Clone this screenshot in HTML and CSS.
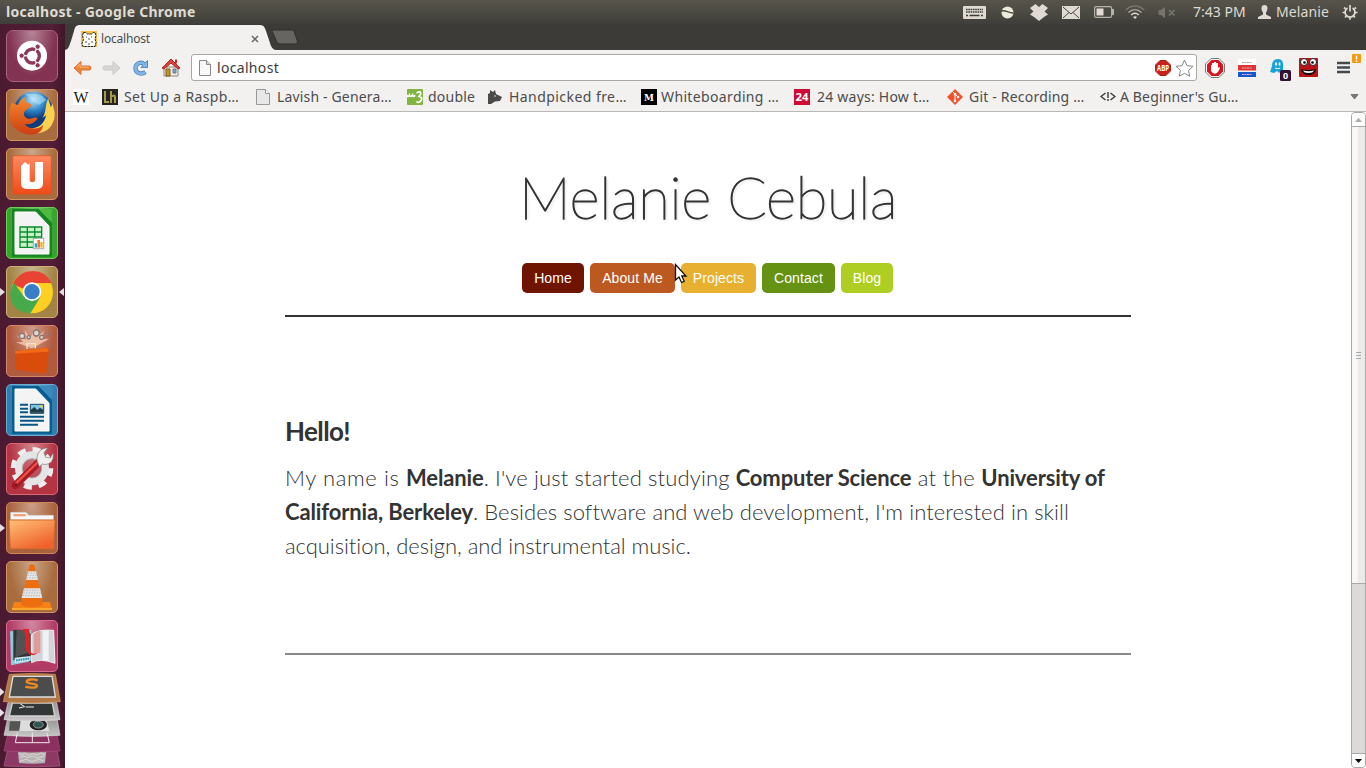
FILE: index.html
```
<!DOCTYPE html>
<html lang="en">
<head>
<meta charset="utf-8">
<title>localhost</title>
<link rel="stylesheet" href="styles.css">
</head>
<body>
<header class="panel">
  <span class="panel-title">localhost - Google Chrome</span>
  <div class="tray">
    <svg class="keyboard" width="23" height="13" viewBox="0 0 23 13"><rect width="23" height="13" rx="1" fill="#dfdbd2"/><path d="M3 3.500h17M3 6h17" stroke="#3c3b37" stroke-width="1.600" stroke-dasharray="1.600 .7"/><path d="M3 9.500h2m1.500 0h10m1.500 0h2" stroke="#3c3b37" stroke-width="1.600"/></svg>
    <svg class="orb" width="13" height="13" viewBox="0 0 13 13"><circle cx="6.500" cy="6.500" r="6" fill="#eceadb"/><path d="M0 5.500C4 2.500 7 7.500 12.500 7" stroke="#4a4943" stroke-width="1.400" fill="none"/></svg>
    <svg class="dropbox" width="18" height="17" viewBox="0 0 18 17"><path d="M5.500 0L9 3l3.500-3L18 4l-3.500 3.500L18 10.500l-4 2.500-5 4-5-4-4-2.500 3.500-3L0 4z" fill="#dfdbd2"/></svg>
    <svg class="mail" width="18" height="13" viewBox="0 0 18 13"><rect width="18" height="13" fill="#dfdbd2"/><path d="M1 1l8 7 8-7M1 12l6-5.500M17 12l-6-5.500" stroke="#45443e" fill="none"/></svg>
    <svg class="battery" width="20" height="12" viewBox="0 0 20 12"><rect x=".6" y=".6" width="17" height="10.800" rx="1.500" fill="none" stroke="#b5b2a9" stroke-width="1.200"/><path d="M2.500 2.500h7v7h-7z" fill="#dfdbd2"/><path d="M18 3h2v6h-2z" fill="#b5b2a9"/></svg>
    <svg class="wifi" width="20" height="14" viewBox="0 0 20 14"><g fill="none" stroke-width="1.500"><path d="M.8 5C6-.5 14-.5 19.200 5" stroke="#77756d"/><path d="M3.500 7.500c4-3.800 9-3.800 13 0" stroke="#aaa79d"/><path d="M6.200 10c2.500-2.300 5-2.300 7.600 0" stroke="#dfdbd2"/></g><path d="M8 12l2 2 2-2c-1-1-3-1-4 0" fill="#dfdbd2"/></svg>
    <svg class="sound" width="18" height="13" viewBox="0 0 18 13"><path d="M1 4.500h2l3.500-3v10L3 8.500H1z" fill="#77756d" stroke="#77756d"/><path d="M11 4l5.500 5.500m0-5.500L11 9.500" stroke="#77756d" stroke-width="1.700"/></svg>
    <span class="clock">7:43 PM</span>
    <svg class="person" width="13" height="14" viewBox="0 0 13 14"><path d="M6.500 0C2.500 0 3 5 5 7.500v2L0 12v2h13v-2L8 9.500v-2C10 5 10.500 0 6.500 0" fill="#dfdbd2"/></svg>
    <span class="user">Melanie</span>
    <svg class="gear" width="16" height="16" viewBox="0 0 16 16" fill="none" stroke="#dfdbd2"><path d="M5.500 4a4.900 4.900 0 1 0 5 0M8 1v6.500" stroke-width="1.700"/><path d="M2 3.500l1.500 1.300M14 3.500l-1.500 1.300M.5 8.500h2.500m10 0h2.500M3 13.500l1.500-1.500m8.500 1.500l-1.500-1.500M8 13.500v2.300" stroke-width="1.700"/></svg>
  </div>
</header>

<div class="desktop">
  <nav class="launcher">
    <div class="tile dash"><svg viewBox="0 0 156 156"><circle cx="78" cy="77" r="45" fill="#fff"/><circle cx="79" cy="78" r="21" fill="none" stroke="#8b3a5c" stroke-width="10"/><path d="M79 78L48 77M79 78l16-27M79 78l16 27" stroke="#fff" stroke-width="4"/><g fill="#8b3a5c" stroke="#fff" stroke-width="3"><circle cx="47" cy="77" r="8"/><circle cx="95" cy="50" r="8"/><circle cx="95" cy="106" r="8"/></g></svg></div>
    <div class="tile brown"><svg viewBox="0 0 156 156"><defs><radialGradient id="globe" cx=".5" cy=".2"><stop offset="0" stop-color="#c4ebff"/><stop offset=".6" stop-color="#2d83c6"/><stop offset="1" stop-color="#123b7c"/></radialGradient><linearGradient id="fox" x2="0" y2="1"><stop stop-color="#f38a2d"/><stop offset="1" stop-color="#cd3d13"/></linearGradient></defs><circle cx="82" cy="66" r="58" fill="url(#globe)"/><path d="M55 12c24 8 46-6 66 22L98 48 78 33z" fill="#b4e4fa" opacity=".55"/><path d="M127 28c0 10 6 16 7 26l7-10c-1 12 7 21 5 36-3 31-24 53-55 52-16 0-26-8-31-14 35 4 55-12 60-39l-11 8c14-19 7-40 18-59" fill="#f7d14f"/><path d="M17 41l18 7c8-15 15-22 22-23-1 8 2 13 6 17 5 0 9 0 13 5-2 8-9 12-17 17-10 9-5 24 9 25 11 1 18-8 27-1-6 14-27 21-40 17 16 18 42 17 56 4-1 16-12 25-31 28-43 1-73-29-71-64 0-12 5-25 8-32" fill="url(#fox)"/></svg></div>
    <div class="tile brown"><svg viewBox="0 0 156 156"><defs><linearGradient id="one" x2="0" y2="1"><stop stop-color="#ff8960"/><stop offset="1" stop-color="#f04b18"/></linearGradient></defs><rect x="20" y="23" width="116" height="115" rx="4" fill="url(#one)" stroke="#e34d1c" stroke-width="2"/><path d="M45 54l12-12 10 8 4-6V97c0 8 16 8 16 0V42h24v64q0 17-17 17H62q-17 0-17-17z" fill="#fff"/></svg></div>
    <div class="tile green"><svg viewBox="0 0 156 156"><path d="M18 5h80l40 43v101H18z" fill="#168420"/><path d="M99 6h37v38z" fill="#4fb93f"/><path d="M27 15h62l40 42v84H27z" fill="#f3f3f3" stroke="#fff" stroke-width="3"/><path d="M42 60h65v61H42zM42 75h65M42 90h65M42 105h65M64 60v61M86 60v61" fill="#c6f4c6" stroke="#088b2d" stroke-width="4"/><rect x="82" y="94" width="31" height="31" fill="#fff" stroke="#aaa" stroke-width="3"/><path d="M86 109h7v13h-7z" fill="#29a5dc"/><path d="M94 99h8v23h-8z" fill="#ff7627"/><path d="M103 105h7v17h-7z" fill="#efb728"/></svg></div>
    <div class="tile gold running focused"><svg viewBox="0 0 156 156"><circle cx="78" cy="79" r="63" fill="#ffd021"/><path d="M78 79L20 55C44 0 118 4 136 51H78z" fill="#e94335"/><path d="M78 79l-5 63C10 137 2 82 24 50l31 44z" fill="#46aa4d"/><path d="M55 93L73 142 102 95z" fill="#46aa4d"/><circle cx="78" cy="77" r="28" fill="#fff"/><circle cx="78" cy="77" r="23" fill="#397fc5"/></svg></div>
    <div class="tile rust"><svg viewBox="0 0 156 156"><path d="M77 70L30 52l22-1-22-20 30 13-4-29 17 24 13-30 2 30 28-22-15 26 29-2-40 23" fill="#f5c8ae" opacity=".85"/><g fill="#dcd8d6" stroke="#8b7674" stroke-width="4"><circle cx="48" cy="33" r="8"/><circle cx="91" cy="24" r="9"/><circle cx="68" cy="37" r="5"/><circle cx="107" cy="37" r="6"/><circle cx="125" cy="28" r="3"/></g><path d="M63 72V56h25v14" fill="none" stroke="#f7e0cc" stroke-width="4"/><path d="M27 78l96-10 6 7-9 71-91-12z" fill="#d94c0c"/><path d="M27 78l96-10 6 12-102 6z" fill="#f06a16"/></svg></div>
    <div class="tile blue"><svg viewBox="0 0 156 156"><path d="M18 5h80l40 43v101H18z" fill="#075c91"/><path d="M99 6h37v38z" fill="#3b8bbd"/><path d="M27 15h62l40 42v84H27z" fill="#f4f4f4" stroke="#fff" stroke-width="3"/><path d="M42 62h24M42 74h24M42 85h24M42 98h72M42 110h72M42 122h54" stroke="#075784" stroke-width="6"/><path d="M73 61h40v27H73z" fill="#78c6ed" stroke="#174769" stroke-width="3"/><path d="M74 86V78l11-9 9 9 8-7 10 7v8z" fill="#223d43"/><circle cx="106" cy="67" r="4" fill="#f7ca30"/></svg></div>
    <div class="tile red"><svg viewBox="0 0 156 156"><circle cx="78" cy="76" r="55" fill="none" stroke="#ededed" stroke-width="18" stroke-dasharray="23 20.200"/><circle cx="78" cy="76" r="40" fill="none" stroke="#e5e5e5" stroke-width="22"/><circle cx="78" cy="76" r="29" fill="none" stroke="#aaa" stroke-width="3"/><path d="M28 127L102 54" stroke="#aa1a24" stroke-width="22" stroke-linecap="round"/><path d="M29 122L98 55" stroke="#ee4d48" stroke-width="7"/><path d="M93 52c-2-22 12-38 32-37l-11 14 5 14 14 2 8-15c6 26-16 39-32 33l-9 8z" fill="#eee" stroke="#777" stroke-width="2"/><circle cx="30" cy="125" r="4" fill="#651e24"/></svg></div>
    <div class="tile sienna running"><svg viewBox="0 0 156 156"><defs><linearGradient id="folder" x2=".6" y2="1"><stop stop-color="#ffc078"/><stop offset="1" stop-color="#ef622b"/></linearGradient></defs><path d="M14 54V31h46l8 9h74v14z" fill="#f7f7f7" stroke="#ccc" stroke-width="2"/><path d="M22 36h37v7H22z" fill="#efa278"/><path d="M9 54h138l-5 86H13z" fill="url(#folder)" stroke="#d96a2c" stroke-width="3"/></svg></div>
    <div class="tile brown"><svg viewBox="0 0 156 156"><path d="M24 123h108l6 22H18z" fill="#f58216"/><path d="M18 141h120v6H18z" fill="#ffa72d"/><path d="M70 14q8-8 16 0l26 118q-34 14-68 0z" fill="#ec6e10"/><path d="M66 31h24l6 26H60zM54 82h48l7 29H47z" fill="#e4e4e4"/><path d="M66 36h25M64 43h29M62 51h32M54 88h49M52 96h53M50 104h57" stroke="#b5b5b5" stroke-width="3" stroke-dasharray="4 4"/></svg></div>
    <div class="tile pink"><svg viewBox="0 0 156 156"><path d="M12 34l64-4v94l-61 12z" fill="#8cc9dd"/><path d="M22 30q36-5 54 14v84q-22-14-54-7z" fill="#333"/><path d="M32 30q30-2 43 16v50L28 112z" fill="#777" opacity=".45"/><path d="M76 44q18-17 67-13l4 99q-45-17-71-2z" fill="#d2d4da" stroke="#eee" stroke-width="3"/><path d="M110 32h18v90h-18z" fill="#f1f2f4"/><path d="M83 42q10-10 20-10v66q-12 0-20 7z" fill="#e09a9a"/><path d="M50 27h19c7 20-7 55 5 70 4 6 12 4 21 1-18 17-42 2-37-33 2-16 0-28-8-38" fill="#e02127"/><path d="M26 113l48-5v14l-48 7z" fill="#d5edf4"/><path d="M30 121l40-5" stroke="#3c94b2" stroke-width="7" stroke-dasharray="5 2"/></svg></div>
    <svg class="folded" width="65" height="96" viewBox="0 360 195 288">
      <defs><linearGradient id="slab" x2="0" y2="1"><stop stop-color="#999"/><stop offset="1" stop-color="#c8c6c8"/></linearGradient></defs>
      <path d="M22 598h150l8 44q-84 5-168 0z" fill="#8c3966" stroke="#ae658c" stroke-width="2"/><path d="M54 600l85-2-4 35q-35 5-78 0z" fill="#b8b2b3"/><path d="M57 604l8 6 9-7 12 8 11-7 15 6 10-7 13 5M60 617l12-5 10 5 16-5 12 6 22-6M60 628l18-6 18 7 20-7 14 4" fill="none" stroke="#dcd6d6" stroke-width="3"/>
      <path d="M22 551h150l8 46q-84 7-168 0z" fill="#8c315f" stroke="#a54d77" stroke-width="2"/>
      <path d="M22 504h150l8 46q-84 7-168 0z" fill="url(#slab)" stroke="#d6d6d6" stroke-width="2"/><path d="M30 508h33l-4 28H27z" fill="#555"/><path d="M62 506h79l7 31H58z" fill="#ddd"/><ellipse cx="115" cy="518" rx="26" ry="17" fill="#222"/><ellipse cx="115" cy="518" rx="15" ry="10" fill="#315451" stroke="#999" stroke-width="3"/>
      <path d="M52 542l-6 30h102l-7-30M97 542v30" fill="none" stroke="#f0e7eb" stroke-width="3"/>
      <path d="M24 452h146l10 51q-84 7-168 0z" fill="url(#slab)" stroke="#ddd" stroke-width="2"/><path d="M37 453h120l7 39H28z" fill="#343737" stroke="#d2d2d2" stroke-width="4"/><path d="M61 456l13 8-17 4M77 465h25" stroke="#eee" stroke-width="3" fill="none"/>
      <path d="M28 367q70-5 138 0l15 82q-86 8-171 0z" fill="#b07848" stroke="#dd9a59" stroke-width="2"/><path d="M39 373h117l10 62H28z" fill="#4b4d4d" stroke="#ddd" stroke-width="4"/><path d="M113 385c-12-4-32-4-33 4s31 4 31 12-22 7-35 3" stroke="#f08b20" stroke-width="7" fill="none"/>
      <path d="M0 408l13 12-13 12zM0 470l13 12-13 12z" fill="#e6e2e5"/>
    </svg>
  </nav>

  <div class="browser">
    <div class="tabstrip">
      <svg class="tab-shape" width="234" height="25" viewBox="0 0 234 25"><path d="M0 25c4-1 4-4 6-9l3-10C10 2 11 0 15 0H195c4 0 5 3 6 6l4 12c1 4 3 7 6 7z" fill="#f2f1f0"/><path d="M208 5h18c3 0 3 1 4 4l2 6c1 3 0 4-3 4h-13c-3 0-4-1-5-4l-3-7c-1-2-1-3 0-3" fill="#666561" stroke="#302f2c"/></svg>
      <div class="tab">
        <svg width="16" height="16" viewBox="0 0 16 16"><rect width="16" height="16" fill="#f4c03a"/><path d="M2.500 1.500h2l2 1.500h4l2-1.500h1.500l1 3-1 3.500 1 3.500-1 4h-12l-1-3 1.500-4-1-4z" fill="#fff" stroke="#222" stroke-dasharray="2.500 .7"/><path d="M5 6h1m4 0h1M7 8h2M4 11h2m4 0h2M7 13h2" stroke="#555"/></svg>
        <span class="tab-name">localhost</span>
        <svg class="close" width="8" height="8" viewBox="0 0 8 8"><path d="M1 1l6 6m0-6L1 7" stroke="#666" stroke-width="1.500"/></svg>
      </div>
    </div>

    <div class="toolbar">
      <svg class="back" width="19" height="16" viewBox="0 0 19 16"><path d="M1 8l7-6.500V6h8.500q1.500 0 1.500 2t-1.500 2H8v4.500z" fill="#ef8536" stroke="#d0743a"/><path d="M4 7l3-3v3.200h9" fill="none" stroke="#ffb27b"/></svg>
      <svg class="forward" width="19" height="16" viewBox="0 0 19 16"><path d="M18 8l-7-6.500V6H2.500Q1 6 1 8t1.500 2H11v4.500z" fill="#d8d6d4" stroke="#cac8c6"/></svg>
      <svg class="reload" width="18" height="18" viewBox="0 0 18 18"><path d="M12.500 5.500C9 2 3.500 4.500 3.500 9.200s5.500 7 10 3.800" fill="none" stroke="#5288bd" stroke-width="4.300"/><path d="M15.500 1.500v7H9z" fill="#83b7e7" stroke="#5288bd"/><path d="M12.500 5.500C9 2 3.500 4.500 3.500 9.200s5.500 7 9.500 4" fill="none" stroke="#83b7e7" stroke-width="2.600"/></svg>
      <svg class="home" width="20" height="19" viewBox="0 0 20 19"><path d="M3 9h14v9H3z" fill="#f4efe7" stroke="#8f877a"/><path d="M5 11h4v7H5z" fill="#c99329" stroke="#7d5a20"/><path d="M12 11h3v4h-3z" fill="#76a5d3" stroke="#69788c"/><path d="M14 1.500h2v4h-2z" fill="#b93031"/><path d="M1 10l9-9 9 9-2 1-7-6-7 6z" fill="#dc4340" stroke="#a92526"/></svg>
      <div class="omnibox">
        <svg width="12" height="16" viewBox="0 0 12 16"><path d="M.5.5h7l4 4v11H.5z" fill="#f8f8f8" stroke="#888"/><path d="M7.500.5v4h4" fill="#ddd" stroke="#888"/></svg>
        <span class="address">localhost</span>
        <svg class="abp" width="16" height="16" viewBox="0 0 16 16"><path d="M5 .5h6L15.500 5v6L11 15.500H5L.5 11V5z" fill="#c92218" stroke="#b1201b"/><text x="8" y="11" text-anchor="middle" textLength="12" lengthAdjust="spacingAndGlyphs" class="abp-text">ABP</text></svg>
        <svg class="star" width="19" height="18" viewBox="0 0 19 18"><path d="M9.500 1l2.500 5.700 6 .6-4.500 4.200 1.300 5.800-5.300-3-5.300 3 1.300-5.800L1 7.300l6-.6z" fill="#fff" stroke="#888"/></svg>
      </div>
      <svg class="adblock" width="20" height="20" viewBox="0 0 20 20"><path d="M6 .5h8L19.500 6v8L14 19.500H6L.5 14V6z" fill="#fff" stroke="#777"/><path d="M6.500 2h7L18 6.500v7L13.500 18h-7L2 13.500v-7z" fill="#d9141d"/><path d="M6 7h1V5h2V4h2v1h2v5l1-1 1 1-2 4q-4 4-7-1z" fill="#fff"/></svg>
      <svg class="stripes" width="18" height="18" viewBox="0 0 18 18"><path d="M0 0h18v6H0z" fill="#fff"/><path d="M0 6h18v5.500H0z" fill="#df3434"/><path d="M0 13h18v5H0z" fill="#1557d0"/><path d="M4 3.500h10" stroke="#aaa" stroke-dasharray="2 .5"/><path d="M4 9h10M4 15.500h10" stroke="#f7b0b0" stroke-dasharray="2 .5"/></svg>
      <svg class="ghost" width="21" height="23" viewBox="0 0 21 23"><path d="M2 8q0-7 6-7t5 8v5l-2-1-2 2-2-2-3 2-4-1z" fill="#16a1d8"/><path d="M6 4.500v3m3.500-3v3" stroke="#fff" stroke-width="1.700"/><path d="M5 10q3 1.500 5 0" stroke="#fff" fill="none"/><rect x="10" y="12" width="11" height="11" rx="1.500" fill="#321035"/><text x="15.500" y="20.800" text-anchor="middle" class="ghost-text">0</text></svg>
      <svg class="face" width="19" height="19" viewBox="0 0 19 19"><rect width="19" height="19" rx="1" fill="#b91318"/><circle cx="5" cy="4" r="3.500" fill="#fff" stroke="#222"/><circle cx="14" cy="4" r="3.500" fill="#fff" stroke="#222"/><circle cx="5.500" cy="4.500" r="1.300"/><circle cx="13.500" cy="4.500" r="1.300"/><path d="M2 11q7.500 2 15 0-1 6-7.500 6T2 11" fill="#160b0b"/><path d="M4 12.500q6 1.500 11 0-1 2.500-5.500 2.500T4 12.500" fill="#fff"/></svg>
      <svg class="menu" width="25" height="22" viewBox="0 0 25 22"><path d="M0 10h13M0 14.500h13M0 19h13" stroke="#45484b" stroke-width="2.700"/><rect x="15" y="1" width="9" height="9" rx="1" fill="#f29a12"/><path d="M19.500 2.500v4m0 1v1.500" stroke="#fff" stroke-width="1.500"/></svg>
    </div>

    <div class="bookmarks">
      <div class="bm wiki"><svg width="16" height="16" viewBox="0 0 16 16"><rect width="16" height="16" fill="#fff"/><text x="8" y="13.500" text-anchor="middle" textLength="15" lengthAdjust="spacingAndGlyphs" class="w-text">W</text></svg></div>
      <div class="bm w153 ls34"><svg width="16" height="16" viewBox="0 0 16 16"><rect width="16" height="16" fill="#25251e"/><path d="M3 2v11h4M9 2v12M9 8q4-3 4 0v6" fill="none" stroke="#a29a51" stroke-width="2"/></svg><span>Set Up a Raspb…</span></div>
      <div class="bm w152 ls12"><svg width="16" height="16" viewBox="0 0 16 16"><path d="M1.500.5h9l4 4v11h-13z" fill="#e8e8e8" stroke="#999"/><path d="M10.500.5v4h4" fill="#fff" stroke="#999"/></svg><span>Lavish - Genera…</span></div>
      <div class="bm w80 g5 ls19"><svg width="16" height="16" viewBox="0 0 16 16"><rect width="16" height="16" rx="1" fill="#80b541"/><path d="M0 6q1 3 2.500 0 1 3 3 0 1 3 2.500 0M9.500 4q5-3 4 1.500L12 7.500q4 1 2 4-2 3-4.500 1" fill="none" stroke="#fff" stroke-width="1.700"/></svg><span>double</span></div>
      <div class="bm w154 ls44"><svg width="16" height="16" viewBox="0 0 16 16"><path d="M1 15V5l2-1V1l3 2 2-2 1 4 6 3-2 4-5 .5L4 15z" fill="#4a4a4a"/><circle cx="8" cy="7" r=".8" fill="#eee"/></svg><span>Handpicked fre…</span></div>
      <div class="bm w153 g4 ls34"><svg width="16" height="16" viewBox="0 0 16 16"><rect width="16" height="16"/><text x="8" y="11.500" text-anchor="middle" class="m-text">M</text></svg><span>Whiteboarding …</span></div>
      <div class="bm w153 g7 ls19"><svg width="16" height="16" viewBox="0 0 16 16"><rect width="16" height="16" fill="#ce0934"/><text x="8" y="12" text-anchor="middle" textLength="13" lengthAdjust="spacingAndGlyphs" class="ways-text">24</text></svg><span>24 ways: How t…</span></div>
      <div class="bm w153 ls17"><svg width="16" height="16" viewBox="0 0 16 16"><path d="M8 0l8 8-8 8-8-8z" fill="#f3502c"/><path d="M5.500 2.500L8 5v7M8 5l3 3" stroke="#fff" fill="none"/><g fill="#fff"><circle cx="8" cy="5" r="1.300"/><circle cx="8" cy="12" r="1.300"/><circle cx="11" cy="8" r="1.300"/></g></svg><span>Git - Recording …</span></div>
      <div class="bm g4 ls10"><svg width="16" height="16" viewBox="0 0 16 16"><path d="M5.500 4L1 7.500 5.500 11M10.500 4L15 7.500 10.500 11M8 3v6m0 1v2" fill="none" stroke="#34383b" stroke-width="1.400"/></svg><span>A Beginner's Gu…</span></div>
      <svg class="more" width="9" height="6" viewBox="0 0 9 6"><path d="M1 .5h7L4.500 5z" fill="#777" stroke="#777"/></svg>
    </div>

    <div class="viewport">
      <main class="page">
        <div class="masthead">
          <h1>Melanie Cebula</h1>
          <div class="nav">
            <a class="btn home-btn">Home</a><a class="btn about">About Me</a><a class="btn projects">Projects</a><a class="btn contact">Contact</a><a class="btn blog">Blog</a>
            <svg class="cursor" width="14" height="22" viewBox="0 0 14 22"><path d="M1.500 1.500v15.500l3.500-3 2.500 5.500 2.700-1.200-2.400-5.300H12z" fill="#fff" stroke="#111" stroke-width="1.300"/></svg>
          </div>
        </div>
        <section class="intro">
          <h2>Hello!</h2>
          <p><span class="row"><span class="lead">My name is </span><b>Melanie</b><span class="mid">. I've just started studying </span><b>Computer Science</b><span class="at"> at the </span><b>University of</b></span><span class="row"><b>California, Berkeley</b><span class="besides">. Besides software and web development, I'm interested in skill</span></span><span class="row last">acquisition, design, and instrumental music.</span></p>
        </section>
      </main>
      <div class="scrollbar">
        <div class="arrow up"><svg width="7" height="4"><path d="M3.500 0L7 4H0z" fill="#aaa"/></svg></div>
        <div class="thumb"><i></i><i></i><i></i></div>
        <div class="trough"></div>
        <div class="arrow down"><svg width="7" height="4"><path d="M0 0h7L3.500 4z" fill="#000"/></svg></div>
      </div>
    </div>
  </div>
</div>
</body>
</html>
```
FILE: styles.css
```
* { box-sizing: border-box; }
body { margin: 0; width: 1366px; height: 768px; overflow: hidden; display: flex; flex-direction: column; font: 14px/18px "Noto Sans", sans-serif; background: #3c3b37; }
svg { display: block; flex: none; }
span { white-space: pre; }

/* top panel */
.panel { height: 24px; flex: none; display: flex; align-items: center; justify-content: space-between; background: linear-gradient(#57554b, #3f3e3a); color: #dfdbd2; }
.panel-title { margin-left: 6px; font-weight: 700; letter-spacing: .27px; }
.tray { display: flex; align-items: center; margin-right: 8px; }
.orb { margin-left: 15px; }
.dropbox { margin-left: 16px; }
.mail { margin-left: 14px; }
.battery { margin-left: 14px; }
.wifi { margin-left: 11px; }
.sound { margin-left: 13px; }
.clock { margin-left: 17px; width: 65px; }
.user { margin-left: 5px; width: 66px; letter-spacing: .1px; }

.desktop { flex: 1; display: flex; min-height: 0; }

/* launcher */
.launcher { width: 65px; flex: none; display: flex; flex-direction: column; align-items: center; gap: 7px; padding-top: 6px; background: linear-gradient(90deg, #4b1a31, #531e38 80%, #431529); }
.tile { width: 52px; height: 52px; flex: none; margin-right: 1px; border-radius: 5px; position: relative; border: 1px solid rgba(255, 210, 170, .4); background-image: radial-gradient(ellipse at 50% 0, rgba(255, 255, 255, .4), transparent 65%); }
.tile > svg { width: 52px; height: 52px; margin: -1px; }
.dash { background-color: #833352; border-color: #a7637e; border-radius: 7px; }
.brown { background-color: #a86c3e; border-color: #cf945f; }
.green { background-color: #35a52d; border-color: #6ece58; }
.gold { background-color: #a48444; border-color: #ccb078; }
.rust { background-color: #b05a3e; border-color: #d68567; }
.blue { background-color: #327eaf; border-color: #68add6; }
.red { background-color: #b43444; border-color: #dc6771; }
.sienna { background-color: #a9623c; border-color: #d48554; }
.pink { background-color: #b23b65; border-color: #db6c91; }
.running::before, .focused::after { content: ""; position: absolute; top: 21px; border: 4px solid transparent; }
.running::before { left: -7px; border-left-color: #e3dfe1; border-right: 0; border-left-width: 5px; }
.focused::after { right: -7px; border-right-color: #e3dfe1; border-left: 0; border-right-width: 5px; }
.folded { margin-top: -7px; }

/* browser chrome */
.browser { flex: 1; display: flex; flex-direction: column; min-width: 0; background: #f2f1f0; }
.tabstrip { height: 26px; flex: none; display: flex; background: #3c3b37; position: relative; }
.tab-shape { position: absolute; left: 0; top: 1px; }
.tab { position: relative; display: flex; align-items: center; width: 210px; padding: 3px 0 0 16px; font-size: 12px; letter-spacing: -.19px; color: #4c4c4c; }
.tab-name { margin-left: 4px; }
.close { margin-left: auto; margin-right: 16px; }
.toolbar { height: 32px; flex: none; display: flex; align-items: center; padding: 3px 4px 0 8px; }
.forward { margin-left: 10px; }
.reload { margin-left: 11px; }
.home { margin-left: 11px; }
.omnibox { width: 1008px; height: 27px; margin-left: 10px; padding: 0 2px 0 7px; display: flex; align-items: center; background: #fff; border: 1px solid #a9a6a2; border-radius: 3px; color: #3c3c3c; }
.address { margin-left: 6px; letter-spacing: .32px; }
.abp { margin-left: auto; }
.star { margin-left: 4px; }
.abp-text { font: 700 8px "Noto Sans", sans-serif; fill: #fff; }
.adblock { margin-left: 8px; }
.stripes { margin-left: 13px; }
.ghost { margin: 3px 0 0 14px; }
.ghost-text { font: 700 9px "Noto Sans", sans-serif; fill: #fff; }
.face { margin-left: 8px; }
.menu { margin: -8px 0 0 19px; }

.bookmarks { height: 30px; flex: none; display: flex; align-items: center; padding: 0 7px 0 8px; border-bottom: 1px solid #b9b7b5; color: #4c4c4c; }
.bm { display: flex; align-items: center; gap: 6px; flex: none; }
.wiki { width: 29px; }
.w80 { width: 80px; }
.w152 { width: 152px; }
.w153 { width: 153px; }
.w154 { width: 154px; }
.g4 { gap: 4px; }
.g5 { gap: 5px; }
.g7 { gap: 7px; }
.ls10 { letter-spacing: .14px; }
.ls12 { letter-spacing: .16px; }
.ls17 { letter-spacing: .2px; }
.ls19 { letter-spacing: .23px; }
.ls34 { letter-spacing: .36px; }
.ls44 { letter-spacing: .44px; }
.w-text { font: 400 16px "Liberation Serif", serif; fill: #222; letter-spacing: 0; }
.m-text { font: 700 9px "DejaVu Serif", serif; fill: #fff; letter-spacing: 0; }
.ways-text { font: 700 11px "Noto Sans", sans-serif; fill: #fff; letter-spacing: 0; }
.more { margin-left: auto; }

/* page */
.viewport { flex: 1; display: flex; min-height: 0; background: #fff; }
.page { flex: 1; display: flex; flex-direction: column; align-items: center; color: #333; font-family: Lato, sans-serif; }
.masthead { width: 846px; height: 205px; border-bottom: 2px solid #333; padding-left: 237px; }
h1 { margin: 47px 0 0 -3px; font-size: 58px; line-height: 76px; font-weight: 100; letter-spacing: -.25px; white-space: nowrap; -webkit-text-stroke: 1.3px #333; text-shadow: 2px 2px 2px #ccc; }
.nav { display: flex; gap: 6px; margin-top: 28px; position: relative; font: 14px/30px "Liberation Sans", sans-serif; }
.btn { height: 30px; border-radius: 5px; text-align: center; color: #fff; letter-spacing: .1px; }
.home-btn { width: 62px; background: #701402; }
.about { width: 85px; background: #bc5920; }
.projects { width: 75px; background: #e8b030; }
.contact { width: 73px; background: #659213; }
.blog { width: 52px; background: #afce23; }
.cursor { position: absolute; left: 152px; top: 0; }
.intro { width: 846px; height: 338px; border-bottom: 2px solid #888; }
h2 { margin: 96px 0 0; font-size: 26px; line-height: 36px; letter-spacing: -.6px; font-weight: 700; }
p { margin: 12px 0 0; font-size: 22px; line-height: 34px; font-weight: 300; }
.row { display: block; }
b { font-weight: 700; letter-spacing: -.13px; }
.lead { letter-spacing: .61px; }
.mid { letter-spacing: .14px; }
.at { letter-spacing: .36px; }
.besides { letter-spacing: .08px; }
.last { letter-spacing: -.05px; }

/* scrollbar */
.scrollbar { width: 15px; display: flex; flex-direction: column; background: #dbdad8; border: 1px solid #aaa9a7; border-radius: 4px; overflow: hidden; }
.arrow { height: 14px; flex: none; display: flex; align-items: center; justify-content: center; background: #fcfcfc; }
.up { height: 13px; }
.thumb { height: 458px; flex: none; border: solid #aaa9a7; border-width: 1px 0; background: linear-gradient(90deg, #f8f7f6 50%, #eceae9 50%); display: flex; flex-direction: column; align-items: center; justify-content: center; gap: 2px; }
.thumb i { width: 5px; height: 1px; background: #aaa; }
.trough { flex: 1; }
.down { border-top: 1px solid #aaa9a7; }
```
